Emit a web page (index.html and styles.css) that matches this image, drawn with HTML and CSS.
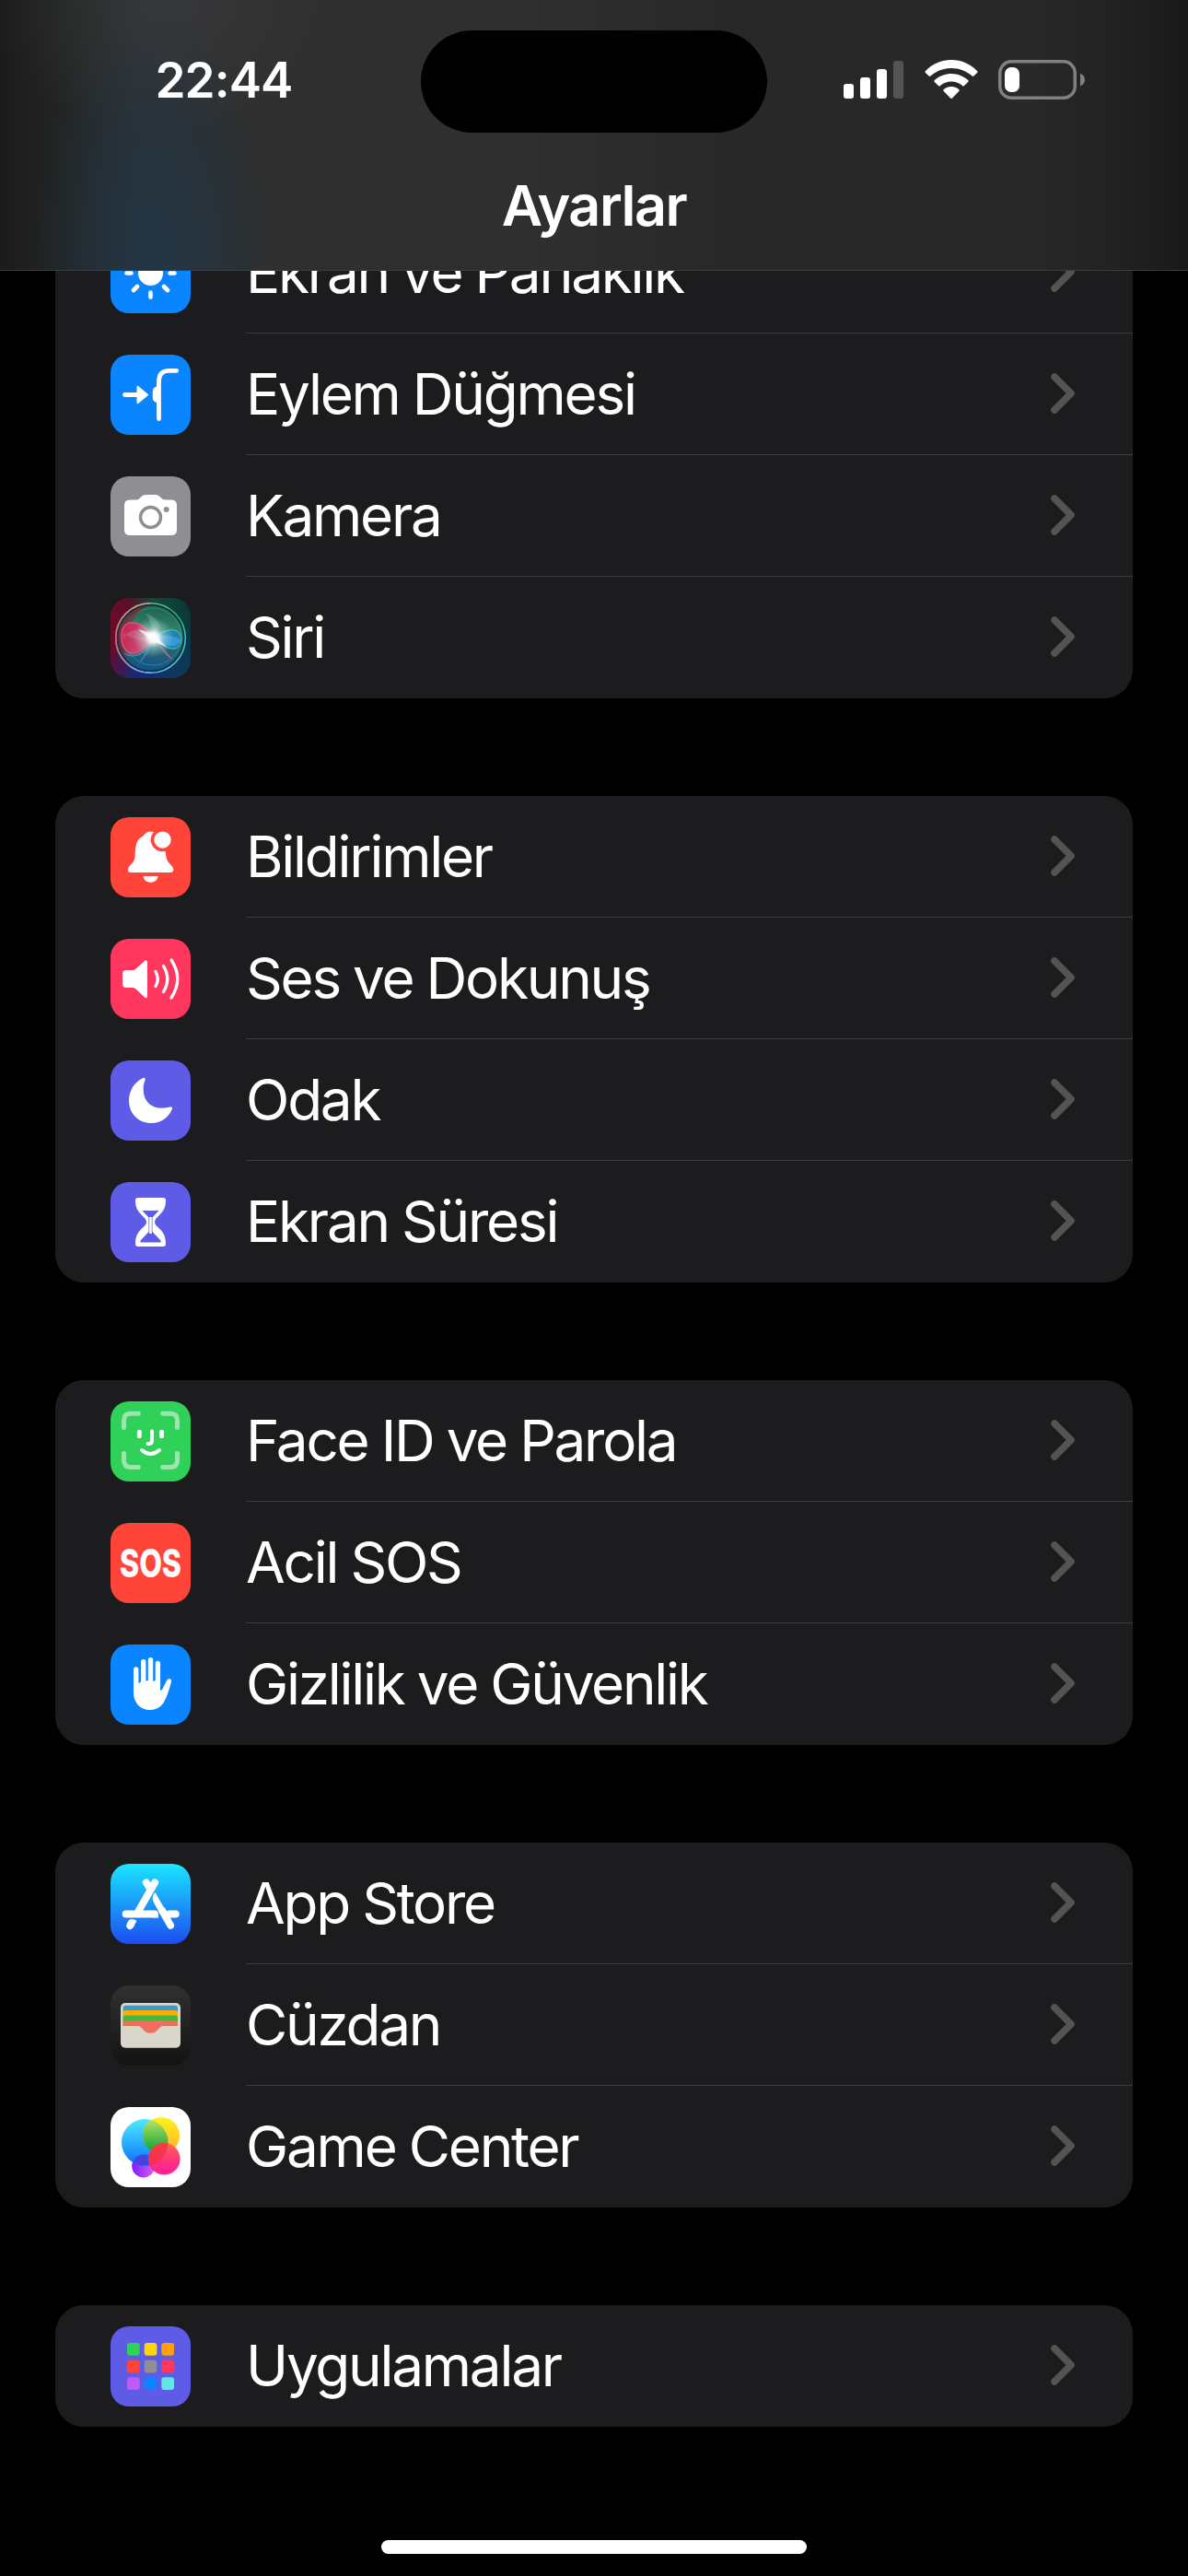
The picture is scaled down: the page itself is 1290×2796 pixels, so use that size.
FILE: index.html
```html
<!DOCTYPE html>
<html lang="tr">
<head>
    <meta charset="UTF-8">
    <title>Ayarlar</title>
    <link rel="stylesheet" href="styles.css">
</head>
<body>
    <header class="header">
        <div class="status-bar">
            <div class="time">22:44</div>
            <div class="island"></div>
            <div class="status-icons">
                <svg class="signal" width="65" height="43" viewBox="0 0 65 43">
                    <rect x="0" y="26" width="11" height="16" rx="3" fill="#fff"/>
                    <rect x="18" y="19" width="11" height="23" rx="3" fill="#fff"/>
                    <rect x="36" y="10" width="11" height="32" rx="3" fill="#fff"/>
                    <rect x="54" y="1" width="11" height="41" rx="3" fill="#545454"/>
                </svg>
                <svg class="wifi" width="58" height="43" viewBox="0 0 58 43" fill="#fff">
                    <path d="M29 0C40 0 50 4.600 57 12Q58 13 57 14L53.400 17.600Q52.500 18.500 51.600 17.600C45.500 12 37.500 9 29 9S12.500 12 6.400 17.600Q5.500 18.500 4.600 17.600L1 14Q0 13 1 12C8 4.600 18 0 29 0Z"/>
                    <path d="M29 15C36 15 42.500 17.800 47.200 22Q48.200 23 47.200 24L43 28Q42 29 41 28C37.700 25 33.500 23.500 29 23.500S20.300 25 17 28Q16 29 15 28L10.800 24Q9.800 23 10.800 22C15.500 17.800 22 15 29 15Z"/>
                    <path d="M29 29C32.300 29 35 30.200 37.200 32Q38.300 33 37.300 34L30 41.500Q29 42.500 28 41.500L20.700 34Q19.700 33 20.800 32C23 30.200 25.700 29 29 29Z"/>
                </svg>
                <svg class="battery" width="95" height="43" viewBox="0 0 95 43">
                    <rect x="1.750" y="1.750" width="81.500" height="39.500" rx="12.500" fill="none" stroke="#808080" stroke-width="3.500"/>
                    <path d="M89 14.500Q94 17 94 21.500T89 28.500Z" fill="#808080"/>
                    <rect x="7" y="8" width="16" height="27" rx="7" fill="#fff"/>
                </svg>
            </div>
        </div>
        <h1 class="title">Ayarlar</h1>
    </header>

    <main class="list">
        <section class="group group-first">
            <div class="row">
                <svg class="icon blue" viewBox="0 0 87 87">
                    <circle cx="43.500" cy="43.500" r="13.500" fill="#fff"/>
                    <path d="M17.500 43.500h5M64.500 43.500h5M43.500 64.500v5M43.500 22.500v-5M29 58l-4 4M58 58l4 4M29 29l-4-4M58 29l4-4" stroke="#fff" stroke-width="4.600" stroke-linecap="round"/>
                </svg>
                <div class="row-body"><span class="label">Ekran ve Parlaklık</span><svg class="chevron" viewBox="0 0 26 44"><path d="M4 4L22 22L4 40"/></svg></div>
            </div>
            <div class="row">
                <svg class="icon blue" viewBox="0 0 87 87">
                    <path d="M52.500 69.500V29Q52.500 17.300 63.500 17.300H71.700M15.500 43.500H30" fill="none" stroke="#fff" stroke-width="4.800" stroke-linecap="round"/>
                    <path d="M51 35.500v15.500Q46.800 50.500 46.800 46.500V40Q46.800 36 51 35.500ZM29.500 34.800L40 43.500L29.500 52.200Z" fill="#fff" stroke="#fff" stroke-width="2" stroke-linejoin="round"/>
                </svg>
                <div class="row-body"><span class="label">Eylem Düğmesi</span><svg class="chevron" viewBox="0 0 26 44"><path d="M4 4L22 22L4 40"/></svg></div>
            </div>
            <div class="row">
                <svg class="icon gray" viewBox="0 0 87 87">
                    <path d="M21 25.500H28Q30.500 25.500 32 23.500L33.500 22Q35.500 20 38 20H49Q51.500 20 53.500 22L55 23.500Q56.500 25.500 59 25.500H66Q72 25.500 72 31.500V58Q72 64 66 64H21Q15 64 15 58V31.500Q15 25.500 21 25.500Z" fill="#fff"/>
                    <circle cx="43.500" cy="44.500" r="11" fill="none" stroke="#8e8e93" stroke-width="3.400"/>
                    <circle cx="60.700" cy="36" r="3" fill="#8e8e93"/>
                </svg>
                <div class="row-body"><span class="label">Kamera</span><svg class="chevron" viewBox="0 0 26 44"><path d="M4 4L22 22L4 40"/></svg></div>
            </div>
            <div class="row">
                <svg class="icon siri" viewBox="0 0 87 87">
                    <defs>
                        <linearGradient id="siri-ring" x1="0.300" y1="0" x2="0.700" y2="1">
                            <stop offset="0" stop-color="#8fae92"/>
                            <stop offset="0.350" stop-color="#22b583"/>
                            <stop offset="1" stop-color="#55c4ff"/>
                        </linearGradient>
                        <linearGradient id="siri-ring-left" x1="0" y1="0" x2="0" y2="1">
                            <stop offset="0" stop-color="#b9a08a"/>
                            <stop offset="0.500" stop-color="#e8506f"/>
                            <stop offset="1" stop-color="#7aa8e8"/>
                        </linearGradient>
                        <linearGradient id="siri-orb" x1="0.600" y1="0" x2="0.500" y2="1">
                            <stop offset="0" stop-color="#1a5f4a"/>
                            <stop offset="0.350" stop-color="#328069"/>
                            <stop offset="0.600" stop-color="#27656c"/>
                            <stop offset="1" stop-color="#10538f"/>
                        </linearGradient>
                        <linearGradient id="siri-pink" x1="0" y1="0" x2="1" y2="0.300">
                            <stop offset="0" stop-color="#c41f50"/>
                            <stop offset="1" stop-color="#c9587c"/>
                        </linearGradient>
                        <radialGradient id="siri-glow" cx="0.500" cy="0.500" r="0.500">
                            <stop offset="0" stop-color="#fff"/>
                            <stop offset="0.250" stop-color="#fff" stop-opacity="0.900"/>
                            <stop offset="0.500" stop-color="#d4f2ee" stop-opacity="0.450"/>
                            <stop offset="1" stop-color="#a0e0dc" stop-opacity="0"/>
                        </radialGradient>
                    </defs>
                    <circle cx="43.500" cy="43.500" r="37" fill="url(#siri-orb)"/>
                    <path d="M43 7A36.500 36.500 0 0 0 20 71C9 48 16 22 43 7Z" fill="#7a2335" opacity="0.750"/>
                    <circle cx="46" cy="42" r="31" fill="none" stroke="#38c79a" stroke-opacity="0.400"/>
                    <path d="M15 31C24 20 39 27 47 43C42 60 30 68 17 60Z" fill="#74707c" opacity="0.500"/>
                    <path d="M47 43C39 31 30 27 23 27C14 27 11 36 12 45C13 55 18 60 25 60C33 60 40 51 47 43Z" fill="url(#siri-pink)" stroke="#ff4f80" stroke-width="1.200"/>
                    <path d="M14 46C18 32 34 32 47 43C34 49 20 44 14 37" fill="#d1829a" opacity="0.400"/>
                    <path d="M15 60C26 68 39 59 47 43" fill="none" stroke="#43a6a8"/>
                    <path d="M47 43C58 35 66 33 72 36C80 40 78 53 70 55C61 56 54 50 47 43Z" fill="#2383a8" stroke="#3ecbd0"/>
                    <path d="M50 43C59 39 69 41 77 46C71 55 60 54 50 43Z" fill="#3b9fe0" opacity="0.800"/>
                    <path d="M47 43L54 30C50 22 45 19 38 17C44 25 46 34 47 43Z" fill="#8fb3a1" opacity="0.400"/>
                    <path d="M48 44L68 67Q60 65 48 44Z" fill="#a06a94" opacity="0.900"/>
                    <path d="M46 45L30 72Q42 62 46 45Z" fill="#4b83b8" opacity="0.700"/>
                    <circle cx="46.500" cy="43" r="22" fill="url(#siri-glow)"/>
                    <path d="M30 34L48 39L53 45L61 53L45 47Z" fill="#fff" opacity="0.700"/>
                    <circle cx="43.500" cy="43.500" r="36.500" fill="none" stroke="#10252b" stroke-opacity="0.700" stroke-width="3"/>
                    <circle cx="43.500" cy="43.500" r="37.800" fill="none" stroke="url(#siri-ring)" stroke-width="1.600"/>
                    <path d="M43.500 5.700A37.800 37.800 0 0 0 43.500 81.300" fill="none" stroke="url(#siri-ring-left)" stroke-width="1.600"/>
                </svg>
                <div class="row-body"><span class="label">Siri</span><svg class="chevron" viewBox="0 0 26 44"><path d="M4 4L22 22L4 40"/></svg></div>
            </div>
        </section>

        <section class="group">
            <div class="row">
                <svg class="icon red" viewBox="0 0 87 87">
                    <path d="M19 57C19 52 26 50.500 26.500 43C27 35 26.500 24 35.500 20.500C37 17.500 40 15.500 43.500 15.500Q52 16 53.500 23C61 28 59 36 60.500 43C61.500 50.500 68.300 52 68.300 57Q68.300 60 65 60H22Q19 60 19 57Z" fill="#fff"/>
                    <path d="M35.500 64H51.500Q50.500 70.700 43.500 70.700T35.500 64Z" fill="#fff"/>
                    <circle cx="56.500" cy="24.600" r="12.700" fill="#ff453a"/>
                    <circle cx="56.500" cy="24.600" r="9.200" fill="#fff"/>
                </svg>
                <div class="row-body"><span class="label">Bildirimler</span><svg class="chevron" viewBox="0 0 26 44"><path d="M4 4L22 22L4 40"/></svg></div>
            </div>
            <div class="row">
                <svg class="icon pink" viewBox="0 0 87 87">
                    <path d="M17 34H24Q26 34 27.500 32.500L36.500 24.500Q40 21.500 40 26V61.500Q40 66 36.500 63L27.500 54.500Q26 53 24 53H17Q13 53 13 49V38Q13 34 17 34Z" fill="#fff"/>
                    <path d="M49 35.500Q53.500 43.500 49 51.500M57.500 29.500Q66 43.500 57.500 57.500M66 23Q79.500 43.500 66 64" fill="none" stroke="#fff" stroke-width="3.300" stroke-linecap="round"/>
                </svg>
                <div class="row-body"><span class="label">Ses ve Dokunuş</span><svg class="chevron" viewBox="0 0 26 44"><path d="M4 4L22 22L4 40"/></svg></div>
            </div>
            <div class="row">
                <svg class="icon indigo" viewBox="0 0 87 87">
                    <path d="M34.500 19.500C37 18 38.200 19 37.500 21.500C36 25 35.700 28 35.700 32C35.700 44 44 51.800 56 51.800C60 51.800 62 51.300 64.500 50.600C67 50 67.800 51.300 66.500 53.700C62.500 62 55 68 44.500 68C30 68 20 57.500 20 43.500C20 33 26 23.500 34.500 19.500Z" fill="#fff"/>
                </svg>
                <div class="row-body"><span class="label">Odak</span><svg class="chevron" viewBox="0 0 26 44"><path d="M4 4L22 22L4 40"/></svg></div>
            </div>
            <div class="row">
                <svg class="icon indigo" viewBox="0 0 87 87">
                    <path d="M30 17H57Q60 17 60 20C60 30 56 33 49.500 39.500Q46.500 43.500 49.500 47C56 53 60 57 60 67Q60 70 57 70H30Q27 70 27 67C27 57 31 53 37.500 47Q40.500 43.500 37.500 39.500C31 33 27 30 27 20Q27 17 30 17Z" fill="#fff"/>
                    <path d="M34.500 31H52.500L45.500 38.500V54L54.500 63.500V65.500H32.500V63.500L41.500 54V38.500Z" fill="#5e5ce6"/>
                    <path d="M43.500 38V56" stroke="#fff" stroke-width="2.600"/>
                </svg>
                <div class="row-body"><span class="label">Ekran Süresi</span><svg class="chevron" viewBox="0 0 26 44"><path d="M4 4L22 22L4 40"/></svg></div>
            </div>
        </section>

        <section class="group">
            <div class="row">
                <svg class="icon green" viewBox="0 0 87 87" fill="none" stroke="#fff" stroke-linecap="round">
                    <path d="M14.500 28.500V21Q14.500 13.300 22 13.300H30.300M56.700 13.300H65Q72.500 13.300 72.500 21V28.500M72.500 56.500V64Q72.500 71.500 65 71.500H56.700M30.300 71.500H22Q14.500 71.500 14.500 64V56.500" stroke="#98e8ad" stroke-width="5"/>
                    <path d="M31.300 33.300V37.700M55.500 33.300V37.700" stroke-width="5"/>
                    <path d="M45 32.500V42.500Q45 46 41.500 46H40.500M34 53Q43.500 61 53 53" stroke-width="4"/>
                </svg>
                <div class="row-body"><span class="label">Face ID ve Parola</span><svg class="chevron" viewBox="0 0 26 44"><path d="M4 4L22 22L4 40"/></svg></div>
            </div>
            <div class="row">
                <svg class="icon red" viewBox="0 0 87 87">
                    <text class="sos" x="10" y="58.500" textLength="67" lengthAdjust="spacingAndGlyphs">SOS</text>
                </svg>
                <div class="row-body"><span class="label">Acil SOS</span><svg class="chevron" viewBox="0 0 26 44"><path d="M4 4L22 22L4 40"/></svg></div>
            </div>
            <div class="row">
                <svg class="icon blue" viewBox="0 0 87 87">
                    <path d="M27.700 48V27M35.700 46V18.700M43.500 46V16.700M51.400 46V20.400" stroke="#fff" stroke-width="5.400" stroke-linecap="round"/>
                    <path d="M25 43Q30 43 33 40.500Q40 38.500 46 40Q50 38 54 42V50Q56 50 57 47L60.800 39.500Q62 36.500 64.500 37Q66.500 37.800 66 40.500C63 51 61 58 57 64Q52 71 43 71C32 71 25 63 25 52Z" fill="#fff"/>
                </svg>
                <div class="row-body"><span class="label">Gizlilik ve Güvenlik</span><svg class="chevron" viewBox="0 0 26 44"><path d="M4 4L22 22L4 40"/></svg></div>
            </div>
        </section>

        <section class="group">
            <div class="row">
                <svg class="icon app-store" viewBox="0 0 87 87">
                    <path d="M48.200 20.300L30.500 51M38.800 20.300L43.500 28M16.600 54.500H48M64 54.500H70.800M65.200 66.800L56 50.500M22 66L21.200 67.200" fill="none" stroke="#fff" stroke-width="7.800" stroke-linecap="round"/>
                    <path d="M48.500 31Q44 35 47 42L54 55L60 51ZM20 61Q24 58.500 28.500 62L24.500 69L17.800 65Z" fill="#fff"/>
                    <path d="M46 50.600Q51.500 51 52.300 58.400H46Z" fill="#fff"/>
                </svg>
                <div class="row-body"><span class="label">App Store</span><svg class="chevron" viewBox="0 0 26 44"><path d="M4 4L22 22L4 40"/></svg></div>
            </div>
            <div class="row">
                <svg class="icon wallet" viewBox="0 0 87 87">
                    <rect x="11" y="19" width="65" height="48.800" rx="5" fill="#d9d6cc"/>
                    <path d="M13.700 44V24.500Q13.700 21.700 16.500 21.700H70.200Q73 21.700 73 24.500V44Z" fill="#3a99c9"/>
                    <path d="M13.700 44V29.800Q13.700 27 16.500 27H70.200Q73 27 73 29.800V44Z" fill="#ffae03"/>
                    <path d="M13.700 44V35.300Q13.700 32.500 16.500 32.500H70.200Q73 32.500 73 35.300V44Z" fill="#44b93b"/>
                    <path d="M13.700 43.700V41Q13.700 38.200 16.500 38.200H70.200Q73 38.200 73 41V43.700H58C52 43.700 52 51.700 43.400 51.700S35 43.700 29 43.700Z" fill="#f26d5f"/>
                </svg>
                <div class="row-body"><span class="label">Cüzdan</span><svg class="chevron" viewBox="0 0 26 44"><path d="M4 4L22 22L4 40"/></svg></div>
            </div>
            <div class="row">
                <svg class="icon white" viewBox="0 0 87 87">
                    <defs>
                        <linearGradient id="gc-blue" x1="0" y1="0" x2="0" y2="1"><stop offset="0" stop-color="#4cecff"/><stop offset="1" stop-color="#0a70ff"/></linearGradient>
                        <linearGradient id="gc-yellow" x1="0" y1="0" x2="0" y2="1"><stop offset="0" stop-color="#fff31c"/><stop offset="1" stop-color="#ffae2e"/></linearGradient>
                        <linearGradient id="gc-green" x1="0" y1="0" x2="0" y2="1"><stop offset="0" stop-color="#c5ea62"/><stop offset="0.850" stop-color="#1ca83f"/></linearGradient>
                        <linearGradient id="gc-red" x1="0" y1="0" x2="0" y2="1"><stop offset="0" stop-color="#ff6754"/><stop offset="0.600" stop-color="#ff2f83"/><stop offset="1" stop-color="#ff209c"/></linearGradient>
                        <linearGradient id="gc-purple" x1="0" y1="0" x2="1" y2="0"><stop offset="0" stop-color="#7e1dff"/><stop offset="1" stop-color="#dc5cec"/></linearGradient>
                        <clipPath id="gc-clip"><circle cx="37.300" cy="38.300" r="25.300"/></clipPath>
                    </defs>
                    <circle cx="35.700" cy="64" r="12.500" fill="url(#gc-purple)"/>
                    <circle cx="37.300" cy="38.300" r="25.300" fill="url(#gc-blue)"/>
                    <circle cx="55" cy="31" r="20" fill="url(#gc-yellow)"/>
                    <g clip-path="url(#gc-clip)">
                        <circle cx="35.700" cy="64" r="12.500" fill="#4146dd"/>
                        <circle cx="55" cy="31" r="20" fill="url(#gc-green)"/>
                    </g>
                    <circle cx="58.300" cy="56.300" r="17.300" fill="url(#gc-red)"/>
                    <circle cx="58.300" cy="56.300" r="17.300" fill="#f53042" opacity="0.800" clip-path="url(#gc-clip)"/>
                </svg>
                <div class="row-body"><span class="label">Game Center</span><svg class="chevron" viewBox="0 0 26 44"><path d="M4 4L22 22L4 40"/></svg></div>
            </div>
        </section>

        <section class="group">
            <div class="row">
                <svg class="icon indigo" viewBox="0 0 87 87">
                    <rect x="18" y="18" width="13.700" height="13.700" rx="3" fill="#30d158"/>
                    <rect x="36.700" y="18" width="13.700" height="13.700" rx="3" fill="#ffd60a"/>
                    <rect x="55.300" y="18" width="13.700" height="13.700" rx="3" fill="#ff9f0a"/>
                    <rect x="18" y="36.700" width="13.700" height="13.700" rx="3" fill="#ff453a"/>
                    <rect x="36.700" y="36.700" width="13.700" height="13.700" rx="3" fill="#8e8e93"/>
                    <rect x="55.300" y="36.700" width="13.700" height="13.700" rx="3" fill="#ff375f"/>
                    <rect x="18" y="55.300" width="13.700" height="13.700" rx="3" fill="#bf5af2"/>
                    <rect x="36.700" y="55.300" width="13.700" height="13.700" rx="3" fill="#0a84ff"/>
                    <rect x="55.300" y="55.300" width="13.700" height="13.700" rx="3" fill="#63e6e2"/>
                </svg>
                <div class="row-body"><span class="label">Uygulamalar</span><svg class="chevron" viewBox="0 0 26 44"><path d="M4 4L22 22L4 40"/></svg></div>
            </div>
        </section>
    </main>

    <div class="home-indicator"></div>
</body>
</html>
```

FILE: styles.css
```css
* {
    box-sizing: border-box;
}
body {
    margin: 0;
    height: 2796px;
    display: flex;
    flex-direction: column;
    background: #000;
    color: #fff;
    font-family: Inter, "Liberation Sans", sans-serif;
    overflow: hidden;
}

/* header */
.header {
    flex: none;
    height: 294px;
    padding-top: 33px;
    border-bottom: 1px solid #3d3d3f;
    background:
        radial-gradient(ellipse 130px 290px at 165px 293px, rgba(26, 60, 88, 0.55), rgba(26, 60, 88, 0.3) 50%, rgba(26, 60, 88, 0) 100%),
        radial-gradient(ellipse 190px 150px at 180px 0, rgba(66, 66, 70, 0.45), rgba(66, 66, 70, 0) 100%),
        linear-gradient(90deg, #1b1b1b 0, #222423 60px, #2d2f30 150px, #2f2f2f 300px, #2f2f2f 560px, #282828 800px, #282828 1120px, #232323 1200px, #191919 1290px);
}
.status-bar {
    display: grid;
    grid-template-columns: 457px 376px 1fr;
    align-items: center;
    height: 111px;
}
.time {
    padding: 0 0 3px 29px;
    text-align: center;
    font-size: 53px;
    font-weight: 600;
    line-height: 60px;
    letter-spacing: -0.9px;
}
.island {
    height: 111px;
    border-radius: 56px;
    background: #000;
}
.status-icons {
    display: flex;
    padding: 0 111px 4px 83px;
}
.wifi {
    margin-left: 23px;
}
.battery {
    margin-left: 22px;
}
.title {
    margin: 42px 0 0;
    text-align: center;
    font-size: 61px;
    font-weight: 600;
    line-height: 74px;
    letter-spacing: -1.5px;
}

/* list */
.list {
    flex: 1;
    display: flex;
    flex-direction: column;
    gap: 106px;
    padding: 0 60px;
    overflow: hidden;
}
.group {
    flex: none;
    border-radius: 31px;
    background: #1c1c1e;
    overflow: hidden;
}
/* scrolled partly under the header */
.group-first {
    margin-top: -64px;
}
.row {
    display: flex;
    height: 132px;
    padding-left: 60px;
    gap: 60px;
}
.row-body {
    flex: 1;
    display: flex;
    align-items: center;
    justify-content: space-between;
    padding-right: 63px;
    border-bottom: 1px solid #3d3d40;
}
.row:last-child .row-body {
    border-bottom-color: transparent;
}
.label {
    font-size: 62px;
    line-height: 80px;
    letter-spacing: -2.25px;
    word-spacing: -1px;
    white-space: nowrap;
}
.chevron {
    width: 26px;
    height: 44px;
    margin-bottom: 1px;
    fill: none;
    stroke: #545456;
    stroke-width: 7.5;
    stroke-linecap: round;
    stroke-linejoin: round;
}

/* icons */
.icon {
    flex: none;
    width: 87px;
    height: 87px;
    margin-top: 23px;
    border-radius: 20px;
}
.blue {
    background: #0a84ff;
}
.gray {
    background: #8e8e93;
}
.red {
    background: #ff453a;
}
.pink {
    background: #ff375f;
}
.indigo {
    background: #5e5ce6;
}
.green {
    background: #30d158;
}
.white {
    background: #fff;
}
.app-store {
    background: linear-gradient(#1ae6ff, #1d4cf0);
}
.wallet {
    background: linear-gradient(#303030, #131313);
}
.siri {
    background:
        radial-gradient(circle at 40% 100%, #16277f, rgba(22, 39, 127, 0) 45%),
        radial-gradient(circle at 100% 100%, #0d3a5c, rgba(13, 58, 92, 0) 60%),
        linear-gradient(95deg, #700a2c 0, #5a0f2a 22%, #0f4a3c 50%, #0b3434 100%);
}
.sos {
    fill: #fff;
    font-family: Inter, "Liberation Sans", sans-serif;
    font-size: 42px;
    font-weight: 800;
}

.home-indicator {
    flex: none;
    align-self: center;
    width: 462px;
    height: 15px;
    margin-bottom: 24px;
    border-radius: 8px;
    background: #fff;
}
```
